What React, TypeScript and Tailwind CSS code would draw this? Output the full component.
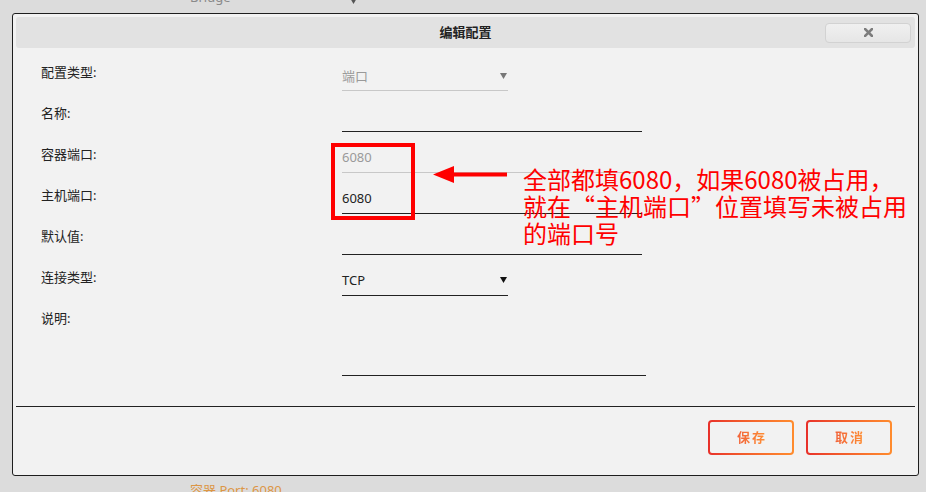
import React from "react";

const CJK = { fontFamily: '"Noto Sans", "Noto Sans CJK SC", sans-serif' };

function Caret({ color }: { color: string }) {
  return (
    <svg width="7" height="7" viewBox="0 0 7 7" className="shrink-0">
      <polygon points="0,1 7,1 3.5,7" fill={color} />
    </svg>
  );
}

function Row({ label, children }: { label: string; children: React.ReactNode }) {
  return (
    <div className="flex h-[41px] items-start">
      <div className="w-[301px] pt-[7px] text-[13px] leading-[20px] text-[#222]">{label}</div>
      {children}
    </div>
  );
}

export default function App() {
  return (
    <div className="relative h-[492px] w-[926px] overflow-hidden bg-[#dcdcdc]" style={CJK}>
      {/* background strip above dialog */}
      <div className="relative h-[13px] overflow-hidden">
        <div className="absolute left-[190px] top-[-11px] text-[13px] leading-[16px] text-[#8a8a8a]">Bridge</div>
        <div className="absolute left-[350px] top-[-3px]">
          <Caret color="#555" />
        </div>
      </div>

      {/* dialog */}
      <div className="ml-[12px] w-[907px] rounded-[3px] border border-[#1e1e1e] bg-[#f2f2f2] px-[3px] pt-[3px]">
        <div className="grid h-[31px] grid-cols-[1fr_auto_1fr] items-center rounded-[3px] bg-[#e2e2e2]">
          <div />
          <div className="text-[13px] font-bold text-[#222]">编辑配置</div>
          <div className="flex justify-end pr-[4px]">
            <div className="flex h-[20px] w-[86px] items-center justify-center rounded-[4px] border border-[#d2d2d2] bg-gradient-to-b from-[#f0f0f0] to-[#e6e6e6]">
              <svg width="9" height="9" viewBox="0 0 9 9">
                <path d="M1 1 L8 8 M8 1 L1 8" stroke="#7d7d7d" strokeWidth="2.6" strokeLinecap="square" />
              </svg>
            </div>
          </div>
        </div>

        <div className="mt-[7px] pl-[25px]">
          <Row label="配置类型:">
            <div className="flex h-[36px] w-[166px] items-start justify-between border-b border-[#c8c8c8] pt-[11px] pr-[1px]">
              <span className="text-[13px] leading-[20px] text-[#9a9a9a]">端口</span>
              <span className="pt-[6px]"><Caret color="#777" /></span>
            </div>
          </Row>
          <Row label="名称:">
            <div className="h-[36px] w-[300px] border-b border-[#222]" />
          </Row>
          <Row label="容器端口:">
            <div className="h-[36px] w-[300px] border-b border-[#c8c8c8] pt-[10px] text-[13px] leading-[20px] text-[#9a9a9a]">6080</div>
          </Row>
          <Row label="主机端口:">
            <div className="h-[36px] w-[300px] border-b border-[#222] pt-[10px] text-[13px] leading-[20px] text-[#222]">6080</div>
          </Row>
          <Row label="默认值:">
            <div className="h-[36px] w-[300px] border-b border-[#222]" />
          </Row>
          <Row label="连接类型:">
            <div className="flex h-[36px] w-[166px] items-start justify-between border-b border-[#222] pt-[10px] pr-[1px]">
              <span className="text-[13px] leading-[20px] text-[#222]">TCP</span>
              <span className="pt-[6px]"><Caret color="#111" /></span>
            </div>
          </Row>
          <div className="flex h-[75px] items-start">
            <div className="w-[301px] pt-[7px] text-[13px] leading-[20px] text-[#222]">说明:</div>
            <div className="h-[75px] w-[304px] border-b border-[#222]" />
          </div>
        </div>

        <div className="mt-[30px] border-t border-[#222]" />

        <div className="flex justify-end gap-[12px] pr-[23px] pt-[13px] pb-[20px]">
          {["保存", "取消"].map((t) => (
            <div key={t} className="h-[35px] w-[86px] rounded-[4px] bg-gradient-to-r from-[#e8302a] to-[#ff8c2e] p-[2px]">
              <div className="flex h-full w-full items-center justify-center rounded-[2px] bg-[#f2f2f2]">
                <span className="bg-gradient-to-r from-[#f0603a] to-[#ff8f32] bg-clip-text pl-[2px] text-[13px] font-bold tracking-[2px] text-transparent">
                  {t}
                </span>
              </div>
            </div>
          ))}
        </div>
      </div>

      <div className="mt-[5px] pl-[190px] text-[13px] leading-[18px] text-[#dc9645]">容器 Port: 6080</div>

      {/* annotation overlay */}
      <div className="absolute left-[331px] top-[143px] h-[77px] w-[84px] border-[4px] border-[#ff0000]" />
      <svg className="absolute left-[433px] top-[166px]" width="74" height="17" viewBox="0 0 74 17">
        <polygon points="0,8.5 21,0 21,17" fill="#ff0000" />
        <rect x="19" y="6.5" width="55" height="4" fill="#ff0000" />
      </svg>
      <div className="absolute left-[523px] top-[165px] text-[24px] leading-[27px] text-[#ff0000]" style={{ fontFamily: '"Noto Sans CJK SC", sans-serif' }}>
        全部都填6080，如果6080被占用，
        <br />
        就在“主机端口”位置填写未被占用
        <br />
        的端口号
      </div>
    </div>
  );
}
